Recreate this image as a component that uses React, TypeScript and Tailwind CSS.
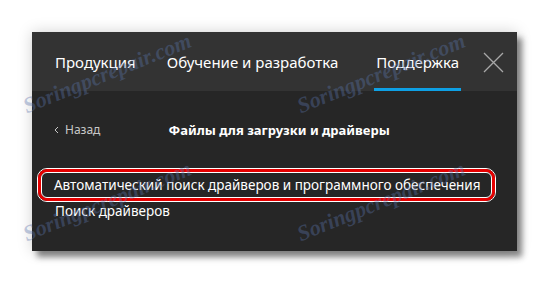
import React from "react";

const WM = ({ x, y }: { x: number; y: number }) => (
  <div
    className="pointer-events-none absolute text-[22px] italic font-bold text-[rgba(90,115,170,0.38)] whitespace-nowrap [font-family:'Liberation_Serif',serif] -rotate-[22deg] origin-left"
    style={{ left: x, top: y }}
  >
    Soringpcrepair.com
  </div>
);

export default function App() {
  return (
    <div className="relative w-[549px] h-[283px] bg-white overflow-hidden pt-[32px] pl-[32px] [font-family:'Noto_Sans',sans-serif]">
      <div className="w-[485px] h-[219px] flex flex-col shadow-[5px_6px_6px_rgba(0,0,0,0.45),0_0_14px_rgba(0,0,0,0.18)]">
        <div className="h-[59px] bg-[#333333] flex items-stretch text-white text-[15px]">
          <div className="ml-[23px] flex flex-col justify-center pt-[4px] border-b-[3px] border-transparent">Продукция</div>
          <div className="ml-[31px] flex flex-col justify-center pt-[4px] border-b-[3px] border-transparent">Обучение и разработка</div>
          <div className="ml-[36px] px-[2px] flex flex-col justify-center pt-[4px] border-b-[3px] border-[#0ea0e4]">Поддержка</div>
          <div className="ml-auto mr-[13px] flex items-center pt-[2px]">
            <svg width="21" height="21" viewBox="0 0 21 21">
              <path d="M1 1L20 20M20 1L1 20" stroke="#a8a8a8" strokeWidth="1.3" fill="none" />
            </svg>
          </div>
        </div>
        <div className="flex-1 bg-[#262626] flex flex-col">
          <div className="h-[77px] flex items-start pt-[30px]">
            <div className="ml-[22px] flex items-center text-[12px] text-[#c8c8c8]">
              <svg width="5" height="8" viewBox="0 0 5 8" className="mr-[6px]">
                <path d="M4 1L1 4L4 7" stroke="#c8c8c8" strokeWidth="1" fill="none" />
              </svg>
              <span>Назад</span>
            </div>
            <div className="ml-[68px] text-[13px] font-bold text-white">Файлы для загрузки и драйверы</div>
          </div>
          <div className="ml-[5px] w-[459px] border border-white rounded-[10px]">
            <div className="border-[3px] border-[#e60000] rounded-[9px]">
              <div className="border border-white rounded-[6px] h-[26px] flex items-center pl-[12px] text-[13.5px] text-white whitespace-nowrap">
                Автоматический поиск драйверов и программного обеспечения
              </div>
            </div>
          </div>
          <div className="ml-[23px] mt-[0px] leading-[18px] text-[13.5px] text-white">Поиск драйверов</div>
        </div>
      </div>
      <WM x={24} y={90} />
      <WM x={298} y={90} />
      <WM x={24} y={218} />
      <WM x={298} y={218} />
    </div>
  );
}
